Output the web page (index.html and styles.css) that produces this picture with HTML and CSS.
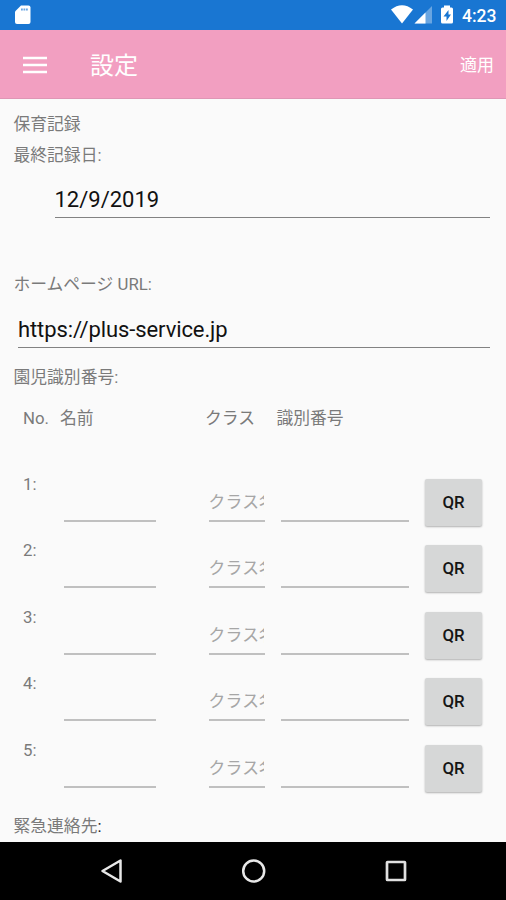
FILE: index.html
```html
<!DOCTYPE html>
<html lang="ja">
<head>
<meta charset="utf-8">
<title>設定</title>
<link rel="stylesheet" href="styles.css">
</head>
<body>
<div class="screen">
  <div class="status">
    <svg class="sd" width="16" height="20" viewBox="0 0 16 20"><path fill="#fff" fill-rule="evenodd" d="M6 0.500H13.500Q15.500 .5 15.500 2.500V17Q15.500 19 13.500 19H2Q0 19 0 17V6.500Z"/><path d="M6 4.500H13" stroke="#1976d2" stroke-opacity=".65" stroke-width="2" stroke-dasharray="1.800 .7"/></svg>
    <svg class="signals" width="65" height="20" viewBox="0 0 65 20">
      <path fill="#fff" d="M0 4.500Q11-4 22 4.500L11 18.500Z"/>
      <path fill="#fff" fill-opacity=".35" d="M41 1V18.500H23.500Z"/>
      <path fill="#fff" d="M34.500 7.500V18.500H23.500Z"/>
      <path fill="#fff" fill-rule="evenodd" d="M53 .5H59V2.500H60.500Q62 2.500 62 4V17Q62 18.500 60.500 18.500H51.500Q50 18.500 50 17V4Q50 2.500 51.500 2.500H53ZM57.500 5L52.500 11.500H55.500V16L60 9.500H57.500Z"/>
    </svg>
    <span class="clock">4:23</span>
  </div>
  <header class="appbar">
    <svg class="menu" width="24" height="18" viewBox="0 0 24 18"><path d="M0 2H24M0 9H24M0 16H24" stroke="#fff" stroke-width="2.700"/></svg>
    <h1>設定</h1>
    <span class="apply">適用</span>
  </header>
  <main>
    <div class="label">保育記録</div>
    <div class="label last-date">最終記録日:</div>
    <div class="field date">12/9/2019</div>
    <div class="label home">ホームページ URL:</div>
    <div class="field url">https://plus-service.jp</div>
    <div class="label ids">園児識別番号:</div>
    <div class="grid head"><span>No.</span><span>名前</span><span>クラス</span><span>識別番号</span></div>
    <div class="grid row"><span class="num">1:</span><span class="entry name"></span><span class="entry class"><span class="hint">クラス名</span></span><span class="entry code"></span><button>QR</button></div>
    <div class="grid row"><span class="num">2:</span><span class="entry name"></span><span class="entry class"><span class="hint">クラス名</span></span><span class="entry code"></span><button>QR</button></div>
    <div class="grid row"><span class="num">3:</span><span class="entry name"></span><span class="entry class"><span class="hint">クラス名</span></span><span class="entry code"></span><button>QR</button></div>
    <div class="grid row"><span class="num">4:</span><span class="entry name"></span><span class="entry class"><span class="hint">クラス名</span></span><span class="entry code"></span><button>QR</button></div>
    <div class="grid row"><span class="num">5:</span><span class="entry name"></span><span class="entry class"><span class="hint">クラス名</span></span><span class="entry code"></span><button>QR</button></div>
    <div class="label contact">緊急連絡先<span class="colon">:</span></div>
  </main>
  <nav>
    <svg width="24" height="26" viewBox="0 0 24 26"><path d="M20.500 2.500V23.500L2.500 13Z" fill="none" stroke="#e8e8e8" stroke-width="2.500" stroke-linejoin="round"/></svg>
    <svg width="26" height="26" viewBox="0 0 26 26"><circle cx="12.700" cy="13" r="10.500" fill="none" stroke="#e8e8e8" stroke-width="2.500"/></svg>
    <svg width="24" height="26" viewBox="0 0 24 26"><rect x="3" y="4" width="18" height="18" rx=".5" fill="none" stroke="#e0e0e0" stroke-width="2.700"/></svg>
  </nav>
</div>
</body>
</html>
```

FILE: styles.css
```css
* { box-sizing: border-box; }
body { margin: 0; }
.screen {
  display: flex;
  flex-direction: column;
  width: 506px;
  height: 900px;
  overflow: hidden;
  background: #fafafa;
  color: #7a7a7a;
  font: 16.8px/24px Roboto, "Noto Sans CJK JP", sans-serif;
}
.status {
  display: flex;
  align-items: center;
  flex: 0 0 30px;
  padding: 0 10px 0 15px;
  background: #1976d2;
  color: #fff;
}
.signals { margin-left: auto; }
.clock {
  width: 34px;
  margin-left: 6px;
  padding-top: 2px;
  font-size: 17.5px;
  font-weight: 500;
  white-space: nowrap;
}
.appbar {
  display: flex;
  align-items: center;
  flex: 0 0 69px;
  padding: 1px 12px 0 23px;
  border-bottom: 1px solid #df96b5;
  background: #f29fc1;
  color: #fff;
}
h1 {
  margin: 2px 0 0 43px;
  font-size: 24px;
  line-height: 36px;
  font-weight: 400;
}
.apply { margin-left: auto; font-size: 17px; }
main {
  flex: 1 1 0;
  min-height: 0;
  padding: 13px 16px 0 13.5px;
  overflow: hidden;
}
.label { height: 24px; white-space: nowrap; }
.last-date { margin-top: 7px; }
.field {
  height: 32px;
  border-bottom: 1px solid #828282;
  color: #111;
  font-size: 22px;
  line-height: 28px;
}
.date { margin: 19px 0 0 41px; }
.home { margin-top: 54px; }
.url { margin: 20px 0 0 4.5px; letter-spacing: -.1px; }
.ids { margin-top: 17px; }
.grid {
  display: grid;
  grid-template-columns: 37px 145px 71.5px 148.5px 57px;
  margin-left: 9.5px;
}
.head { height: 24px; margin: 17px 0 42px 9.5px; }
.row { height: 66.4px; }
.entry {
  height: 40px;
  margin-top: 10px;
  padding-top: 8px;
  border-bottom: 2px solid #c0c0c0;
  color: #a6a6a6;
  line-height: 24px;
}
.name { width: 92px; margin-left: 4px; }
.class { width: 56px; margin-left: 3.5px; }
.code { width: 128px; margin-left: 4px; }
.hint {
  display: block;
  width: 55px;
  overflow: hidden;
  white-space: nowrap;
  letter-spacing: .2px;
}
button {
  width: 57px;
  height: 47px;
  margin-top: 7px;
  padding: 0;
  border: 0;
  border-radius: 2px;
  background: #d6d7d7;
  box-shadow: 0 1px 2px rgba(0, 0, 0, .3);
  color: #151515;
  font: 500 16.8px/47px Roboto, sans-serif;
}
.contact { margin-top: 10px; }
.colon { color: #222; }
nav {
  display: flex;
  align-items: center;
  justify-content: space-between;
  flex: 0 0 58px;
  padding: 0 98px 0 100px;
  background: #000;
}
```
